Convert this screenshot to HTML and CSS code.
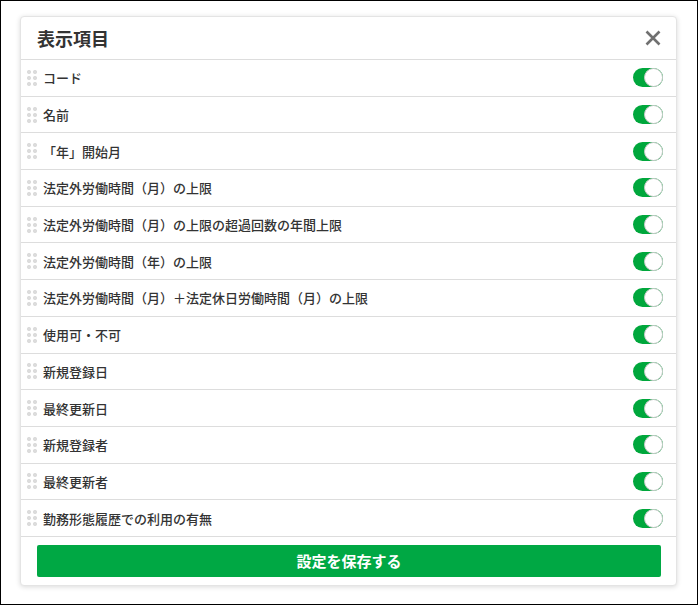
FILE: index.html
```html
<!DOCTYPE html>
<html lang="ja">
<head>
    <meta charset="UTF-8">
    <meta name="viewport" content="width=device-width, initial-scale=1.0">
    <title>表示項目</title>
    <link rel="stylesheet" href="styles.css">
</head>
<body>
    <div class="frame">
        <div class="modal">
            <!-- ヘッダー -->
            <div class="modal-header">
                <h2>表示項目</h2>
                <span class="close">
                    <svg width="16" height="16" viewBox="0 0 16 16"><path d="M1.5 1.5 L14.5 14.5 M14.5 1.5 L1.5 14.5" stroke="#707070" stroke-width="2.6" stroke-linecap="butt"/></svg>
                </span>
            </div>

            <!-- 項目リスト -->
            <ul class="item-list">
                <li class="item"><span class="handle"></span><span class="label">コード</span><span class="toggle on"></span></li>
                <li class="item"><span class="handle"></span><span class="label">名前</span><span class="toggle on"></span></li>
                <li class="item"><span class="handle"></span><span class="label">「年」開始月</span><span class="toggle on"></span></li>
                <li class="item"><span class="handle"></span><span class="label">法定外労働時間（月）の上限</span><span class="toggle on"></span></li>
                <li class="item"><span class="handle"></span><span class="label">法定外労働時間（月）の上限の超過回数の年間上限</span><span class="toggle on"></span></li>
                <li class="item"><span class="handle"></span><span class="label">法定外労働時間（年）の上限</span><span class="toggle on"></span></li>
                <li class="item"><span class="handle"></span><span class="label">法定外労働時間（月）＋法定休日労働時間（月）の上限</span><span class="toggle on"></span></li>
                <li class="item"><span class="handle"></span><span class="label">使用可・不可</span><span class="toggle on"></span></li>
                <li class="item"><span class="handle"></span><span class="label">新規登録日</span><span class="toggle on"></span></li>
                <li class="item"><span class="handle"></span><span class="label">最終更新日</span><span class="toggle on"></span></li>
                <li class="item"><span class="handle"></span><span class="label">新規登録者</span><span class="toggle on"></span></li>
                <li class="item"><span class="handle"></span><span class="label">最終更新者</span><span class="toggle on"></span></li>
                <li class="item"><span class="handle"></span><span class="label">勤務形態履歴での利用の有無</span><span class="toggle on"></span></li>
            </ul>

            <!-- フッター -->
            <div class="modal-footer">
                <button class="btn-save">設定を保存する</button>
            </div>
        </div>
    </div>
</body>
</html>
```

FILE: styles.css
```css
body, html {
    margin: 0;
    padding: 0;
    background: #fff;
    font-family: "Noto Sans CJK JP", "Noto Sans", sans-serif;
    color: #333;
}
.frame {
    width: 698px;
    height: 605px;
    border: 1px solid #000;
    padding: 15px 19px 0 19px;
    box-sizing: border-box;
}
.modal {
    width: 657px;
    box-sizing: border-box;
    background: #fff;
    border: 1px solid #e4e4e4;
    border-radius: 4px;
    box-shadow: 0 1px 5px rgba(0, 0, 0, 0.15);
}
.modal-header {
    display: flex;
    align-items: center;
    justify-content: space-between;
    height: 42px;
    padding: 0 15px 0 16px;
    border-bottom: 1px solid #ddd;
}
.modal-header h2 {
    margin: 0;
    font-size: 18px;
    font-weight: bold;
    color: #333;
}
.close {
    display: flex;
    width: 16px;
    height: 16px;
}
.item-list {
    list-style: none;
    margin: 0;
    padding: 0;
}
.item {
    display: flex;
    align-items: center;
    height: 35.7px;
    padding: 0 13px 0 6px;
    border-bottom: 1px solid #ddd;
}
.handle {
    width: 10px;
    height: 16px;
    margin-right: 6px;
    background-image: radial-gradient(circle at 2px 2px, #dcdcdc 1.8px, transparent 2.3px);
    background-size: 6px 6px;
}
.label {
    flex: 1;
    font-size: 13px;
    font-weight: 500;
    color: #333;
}
.toggle {
    position: relative;
    width: 30px;
    height: 19px;
    border-radius: 10px;
    background: #ccc;
}
.toggle.on {
    background: #00a73c;
}
.toggle::after {
    content: "";
    position: absolute;
    top: 0;
    right: 0;
    width: 19px;
    height: 19px;
    border-radius: 50%;
    background: #fff;
    border: 1px solid #ccc;
    box-sizing: border-box;
}
.modal-footer {
    padding: 8px 15px 8px 16px;
}
.btn-save {
    display: block;
    width: 100%;
    height: 32px;
    border: none;
    border-radius: 2px;
    background: #00a844;
    color: #fff;
    font-family: "Noto Sans CJK JP", "Noto Sans", sans-serif;
    font-size: 15px;
    font-weight: bold;
    cursor: pointer;
}
```
